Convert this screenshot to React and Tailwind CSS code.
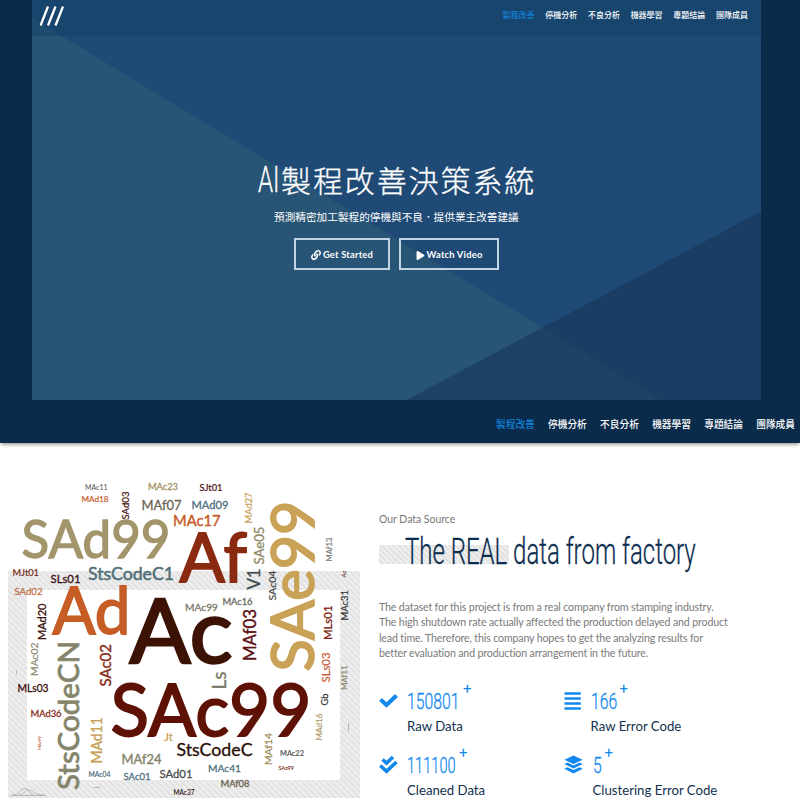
import React from "react";
import { FaLink, FaPlay } from "react-icons/fa";

const NAV = ["製程改善", "停機分析", "不良分析", "機器學習", "專題結論", "團隊成員"];

// text, x, baseline y, length, font size, colour, stroke width
const ACROSS = [
  ["MAc11", 85, 490, 22.5, 7.2, "#4d4d4d", 0],
  ["MAd18", 81.5, 502, 27, 8.4, "#c85a28", 0.2],
  ["MAc23", 148, 489.5, 30, 9.3, "#a39163", 0.3],
  ["MAf07", 141.5, 509.5, 40, 13.2, "#6b6450", 0.3],
  ["SAd99", 21.5, 558, 149, 51.5, "#a3956b", 1.3],
  ["MAc17", 173, 526, 47.5, 14.8, "#c85a28", 0.4],
  ["SJt01", 199.5, 490.5, 23, 9.2, "#4a1010", 0.2],
  ["MAd09", 191.5, 508.5, 37, 11.4, "#4f7080", 0.3],
  ["Af", 179.5, 581.5, 67.5, 68, "#8a2a10", 1.8],
  ["MJt01", 12.5, 576, 26.5, 9, "#7a2a18", 0.2],
  ["SLs01", 50.5, 582.5, 30, 11, "#3a1010", 0.3],
  ["StsCodeC1", 88, 580, 86, 18, "#4f7078", 0.5],
  ["SAd02", 14.5, 595, 28, 9.8, "#c0673a", 0.2],
  ["Ad", 52.5, 633.5, 78, 65, "#c65d25", 1.8],
  ["Ac", 129.5, 662.5, 103, 90, "#3b1204", 2.4],
  ["MAc99", 185, 610.5, 33, 10.3, "#7a7868", 0.3],
  ["MAc16", 222.5, 604.5, 30, 9.5, "#6b6b60", 0.3],
  ["MLs03", 17.5, 692, 31, 10.6, "#3a1010", 0.3],
  ["MAd36", 30.5, 716.5, 31, 9.7, "#8a3020", 0.3],
  ["SAc99", 110.5, 735.5, 201, 72.5, "#5e1205", 1.8],
  ["Jt", 164, 741, 9, 10.5, "#c8a258", 0.2],
  ["StsCodeC", 176.5, 756, 76, 16.8, "#2a1008", 0.3],
  ["MAc22", 280, 755.5, 24, 7.6, "#555555", 0.2],
  ["MAf24", 121.5, 763.5, 40, 13.2, "#85856b", 0.4],
  ["MAc41", 208, 772, 33, 10.4, "#4f7080", 0.3],
  ["SAz99", 278.5, 769.5, 15.5, 5.2, "#7a2a18", 0.1],
  ["SAd01", 159.5, 778, 33, 11.4, "#4d4d4d", 0.3],
  ["SAc01", 123.5, 780, 27, 9.7, "#4f7080", 0.3],
  ["MAc04", 88.5, 776.5, 22, 6.9, "#4f7080", 0.2],
  ["MAf08", 220.5, 787, 29, 9.6, "#6b6450", 0.3],
  ["MAc37", 173.5, 794.5, 21, 6.6, "#2a1008", 0.1],
];

// text, baseline x, bottom y, length, font size, colour, stroke width
const UPWARD = [
  ["SAd03", 129, 519.5, 28, 9.6, "#4a1010", 0.2],
  ["MAd27", 252, 523.5, 31, 9.6, "#c8a258", 0.2],
  ["SAe05", 264, 564.5, 38, 13.4, "#8f8a68", 0.3],
  ["V1", 260, 589.5, 21, 17.2, "#444c50", 0.3],
  ["SAe99", 313.5, 671.5, 171, 59.5, "#c9a257", 1.8],
  ["MAf13", 332, 561.5, 24, 7.9, "#777777", 0.2],
  ["Az", 345.5, 577.5, 7, 5.6, "#4a1010", 0],
  ["SAc04", 276, 600.5, 30, 10.4, "#444444", 0.2],
  ["MAc31", 347.5, 620.5, 30.5, 9.5, "#333333", 0.2],
  ["MLs01", 332, 640, 34.5, 11.7, "#7a1a10", 0.3],
  ["MAd20", 45.5, 640, 36.5, 11.2, "#3a0f0a", 0.3],
  ["MAf03", 256, 661, 52, 17, "#5a1010", 0.4],
  ["SAc02", 111, 686.5, 42.5, 15, "#8a2a18", 0.4],
  ["MAc02", 37.5, 676, 33.5, 10.4, "#8a8a70", 0.2],
  ["StsCodeCN", 79, 790, 149, 29.5, "#85856b", 0.8],
  ["MAr99", 41, 750.5, 14.5, 4.6, "#c87050", 0.1],
  ["MAd11", 102, 763.5, 46.5, 14.6, "#c8a258", 0.4],
  ["Ls", 226, 689.5, 18, 18.5, "#777868", 0.3],
  ["Gb", 328, 705.5, 12, 9.8, "#333333", 0.2],
  ["SLs03", 329.5, 682.5, 30, 11, "#c85a38", 0.2],
  ["MAf11", 347, 690, 24.5, 8, "#8a8a70", 0.2],
  ["MAd16", 322, 740.5, 27, 8.4, "#b09a68", 0.2],
  ["MAf14", 271.7, 765, 32, 10.4, "#a39163", 0.3],
];

function WordCloud() {
  return (
    <svg className="block shrink-0" width="366" height="355" viewBox="0 445 366 355" fontFamily="Lato, sans-serif">
      <defs>
        <pattern id="hatch" width="6" height="6" patternUnits="userSpaceOnUse">
          <rect width="6" height="6" fill="#eeeeee" />
          <path d="M-1.5 -1.5L7.5 7.5M-1.5 4.5L1.5 7.5M4.5 -1.5L7.5 1.5" stroke="#e2e2e2" strokeWidth="1.8" />
        </pattern>
      </defs>
      <path d="M8 571H360V798H8ZM27 590V780H340V590Z" fill="url(#hatch)" fillRule="evenodd" />
      <g fill="none" stroke="#aaaaaa" strokeWidth="0.8">
        <path d="M11 795.5H46M12 795C20 795 20 788.5 24.5 788.5S29 795 34 795M19 795C24 795 25 789.5 29 790S34 795 44 795" />
        <path d="M16.5 670V674.5M94 787.5H100M348.5 723V731" />
      </g>
      {ACROSS.map(([t, x, y, len, size, c, sw]) => (
        <text key={t} x={x} y={y} textLength={len} lengthAdjust="spacingAndGlyphs" fontSize={size} fill={c} stroke={c} strokeWidth={sw}>
          {t}
        </text>
      ))}
      {UPWARD.map(([t, x, y, len, size, c, sw]) => (
        <text key={t} transform={`translate(${x} ${y}) rotate(-90)`} textLength={len} lengthAdjust="spacingAndGlyphs" fontSize={size} fill={c} stroke={c} strokeWidth={sw}>
          {t}
        </text>
      ))}
    </svg>
  );
}

function CheckIcon() {
  return (
    <svg width="20" height="20" viewBox="0 0 20 20" fill="none" stroke="#1288ee" strokeWidth="4">
      <path d="M1.5 8.5L7.5 14L17.5 4.5" />
    </svg>
  );
}

function DoubleCheckIcon() {
  return (
    <svg width="20" height="20" viewBox="0 0 20 20" fill="none" stroke="#1288ee" strokeWidth="3.6">
      <path d="M3.5 4.5L7.5 8L14 2M1.200 10.500L7.500 16.400L17.500 7" />
    </svg>
  );
}

function LinesIcon() {
  return (
    <svg width="20" height="20" viewBox="0 0 20 20" stroke="#1288ee" strokeWidth="2.3">
      <path d="M0.500 2.500H16.800M0.500 7.500H16.800M0.500 12.500H16.800M0.500 17.500H16.800" />
    </svg>
  );
}

function LayersIcon() {
  return (
    <svg width="20" height="20" viewBox="0 0 20 20" fill="#1288ee">
      <path d="M9.500 0.500L18.700 4.800L9.500 9L0.300 4.800ZM0.300 9L3.500 7.600L9.500 10.400L15.500 7.600L18.700 9L9.500 13.400ZM0.300 13.700L3.500 12.200L9.500 15L15.500 12.200L18.700 13.700L9.500 18.400Z" />
    </svg>
  );
}

function Stat({ icon, value, label, width, squeeze, indent }) {
  return (
    <div className="h-16">
      <div className="flex h-7 items-center">
        <div className="h-5 w-[20px] shrink-0">{icon}</div>
        <div className={`${indent} ${width} h-7`}>
          <span className={`inline-block origin-left font-[Roboto] text-[22.500px] leading-7 font-light text-[#1288ee] [-webkit-text-stroke:0.3px_#1288ee] ${squeeze}`}>{value}</span>
        </div>
        <span className="mt-[-24px] ml-px font-[Roboto] text-[15px] leading-4 font-normal text-[#1288ee]">+</span>
      </div>
      <div className={`${indent} -mt-px pl-5 text-[13.200px] leading-6 whitespace-nowrap text-[#12304f]`}>{label}</div>
    </div>
  );
}

export default function App() {
  return (
    <div className="h-[800px] w-[800px] overflow-hidden bg-white font-[Lato,'Noto_Sans_CJK_TC',sans-serif]">
      <section className="h-[400px] bg-[#0a2b4a] pr-[39px] pl-8">
        <div className="relative h-[400px] w-[729px] bg-[#1f4a75]">
          <svg className="absolute inset-0" width="729" height="400" viewBox="32 0 729 400">
            <path d="M32 18L662 400H32Z" fill="#285475" />
            <path d="M761 211.500V400H407Z" fill="#193d63" />
            <path d="M543.500 327.500L662 400H407Z" fill="#1d4263" />
          </svg>
          <div className="relative">
            <header className="flex h-[36px] items-start justify-between bg-[#0a3a60]/30 pr-[13px] pl-2">
              <svg className="mt-1.5" width="25" height="20" viewBox="0 0 25 20" stroke="white" strokeWidth="2.3">
                <path d="M0.500 19.500L8 0.500M8 19.500L15.500 0.500M15.500 19.500L23 0.500" />
              </svg>
              <nav className="flex gap-[10.700px] pt-[9px]">
                {NAV.map((n, i) => (
                  <span key={n} className={`text-[8px] leading-3 font-medium ${i ? "text-white" : "text-[#1480d6]"}`}>{n}</span>
                ))}
              </nav>
            </header>
            <h1 className="mt-[119px] flex h-[48px] items-center pl-[226px] text-[30px] font-light text-white">
              <span className="inline-block w-[22px] shrink-0">
                <span className="inline-block origin-left scale-x-[0.660] pt-px font-[Roboto] text-[36.500px] leading-[48px] font-light [-webkit-text-stroke:0.3px_white]">AI</span>
              </span>
              <span className="pl-px font-['Noto_Sans_CJK_TC'] leading-[48px] font-light tracking-[1.900px] whitespace-nowrap [-webkit-text-stroke:0.3px_white]">製程改善決策系統</span>
            </h1>
            <p className="mt-[5px] pl-[242px] text-[10.650px] leading-[18px] whitespace-nowrap text-white">預測精密加工製程的停機與不良．提供業主改善建議</p>
            <div className="mt-[12px] flex gap-[9px] pl-[262px] text-[9.400px] font-bold text-white">
              <button className="flex h-8 w-[96px] items-center justify-center gap-[2px] border-2 border-[#c3d5e4] pt-[2px] tracking-[0.200px]">
                <FaLink size={10} />Get Started
              </button>
              <button className="flex h-8 w-[100px] items-center justify-center gap-[2px] border-2 border-[#c3d5e4] pt-[2px] tracking-[0.200px]">
                <FaPlay size={9} />Watch Video
              </button>
            </div>
          </div>
        </div>
      </section>
      <nav className="flex h-[43px] justify-end gap-[13.300px] bg-[#0a2b4a] pt-[16px] pr-[5px] shadow-[0_3px_3px_-1px_rgba(0,0,0,0.35)]">
        {NAV.map((n, i) => (
          <span key={n} className={`text-[9.700px] leading-4 font-medium ${i ? "text-white" : "text-[#1480d6]"}`}>{n}</span>
        ))}
      </nav>
      <main className="flex pt-0.5">
        <WordCloud />
        <div className="w-[400px] pt-[66px] pl-[13px]">
          <p className="text-[10.450px] leading-4 text-[#777777]">Our Data Source</p>
          <div className="mt-[18px] h-[19px] w-[130px] bg-[repeating-linear-gradient(45deg,#eeeeee_0px,#eeeeee_2px,#e2e2e2_2px,#e2e2e2_4px)] pl-[26px]">
            <h2 className="inline-block origin-left -translate-y-[15px] scale-x-[0.666] font-[Roboto] text-[36px] leading-[44px] font-light whitespace-nowrap text-[#0c2d50] [-webkit-text-stroke:0.3px_#0c2d50]">The REAL data from factory</h2>
          </div>
          <p className="mt-[34.500px] text-[10.650px] leading-[15.600px] tracking-[-0.155px] whitespace-nowrap text-[#7a7a7a]">
            The dataset for this project is from a real company from stamping industry.<br />
            The high shutdown rate actually affected the production delayed and product<br />
            lead time. Therefore, this company hopes to get the analyzing results for<br />
            better evaluation and production arrangement in the future.
          </p>
          <div className="mt-[26px] grid grid-cols-[184.500px_1fr]">
            <Stat icon={<CheckIcon />} value="150801" label="Raw Data" width="w-[55px]" squeeze="scale-x-[0.700]" indent="ml-2" />
            <Stat icon={<LinesIcon />} value="166" label="Raw Error Code" width="w-[28px]" squeeze="scale-x-[0.700]" indent="ml-[7px]" />
            <Stat icon={<DoubleCheckIcon />} value="111100" label="Cleaned Data" width="w-[51px]" squeeze="scale-x-[0.650]" indent="ml-2" />
            <Stat icon={<LayersIcon />} value="5" label="Clustering Error Code" width="w-[11px]" squeeze="scale-x-[0.700]" indent="ml-[9px]" />
          </div>
        </div>
      </main>
    </div>
  );
}
